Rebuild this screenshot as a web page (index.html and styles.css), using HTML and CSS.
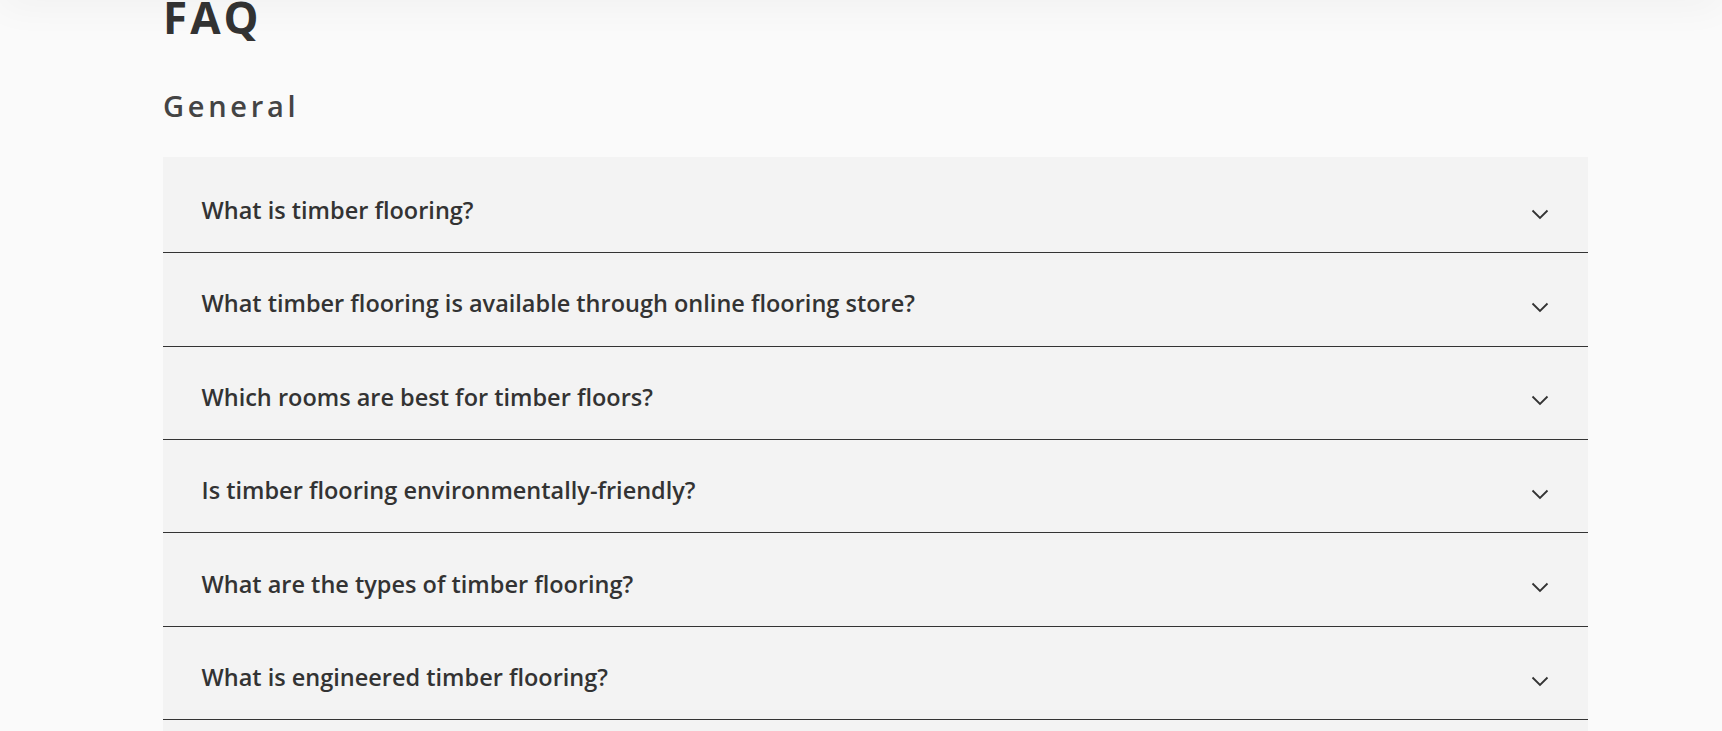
FILE: index.html
```html
<!DOCTYPE html>
<html lang="en">
<head>
<meta charset="utf-8">
<title>FAQ</title>
<link rel="stylesheet" href="styles.css">
</head>
<body>
<div class="top-shadow"></div>
<main class="faq">
  <h1 class="faq-title">FAQ</h1>
  <h2 class="faq-group">General</h2>
  <div class="accordion">
    <div class="acc-item first">
      <span class="acc-q">What is timber flooring?</span>
      <svg class="chev" width="18" height="11" viewBox="0 0 18 11"><polyline points="1.5,1.5 9,9 16.5,1.5" fill="none" stroke="#333" stroke-width="1.8"/></svg>
    </div>
    <div class="acc-item">
      <span class="acc-q">What timber flooring is available through online flooring store?</span>
      <svg class="chev" width="18" height="11" viewBox="0 0 18 11"><polyline points="1.5,1.5 9,9 16.5,1.5" fill="none" stroke="#333" stroke-width="1.8"/></svg>
    </div>
    <div class="acc-item">
      <span class="acc-q">Which rooms are best for timber floors?</span>
      <svg class="chev" width="18" height="11" viewBox="0 0 18 11"><polyline points="1.5,1.5 9,9 16.5,1.5" fill="none" stroke="#333" stroke-width="1.8"/></svg>
    </div>
    <div class="acc-item">
      <span class="acc-q">Is timber flooring environmentally-friendly?</span>
      <svg class="chev" width="18" height="11" viewBox="0 0 18 11"><polyline points="1.5,1.5 9,9 16.5,1.5" fill="none" stroke="#333" stroke-width="1.8"/></svg>
    </div>
    <div class="acc-item">
      <span class="acc-q">What are the types of timber flooring?</span>
      <svg class="chev" width="18" height="11" viewBox="0 0 18 11"><polyline points="1.5,1.5 9,9 16.5,1.5" fill="none" stroke="#333" stroke-width="1.8"/></svg>
    </div>
    <div class="acc-item">
      <span class="acc-q">What is engineered timber flooring?</span>
      <svg class="chev" width="18" height="11" viewBox="0 0 18 11"><polyline points="1.5,1.5 9,9 16.5,1.5" fill="none" stroke="#333" stroke-width="1.8"/></svg>
    </div>
    <div class="acc-item">
      <span class="acc-q">What is solid timber flooring?</span>
      <svg class="chev" width="18" height="11" viewBox="0 0 18 11"><polyline points="1.5,1.5 9,9 16.5,1.5" fill="none" stroke="#333" stroke-width="1.8"/></svg>
    </div>
  </div>
</main>
</body>
</html>
```

FILE: styles.css
```css
html, body {
  margin: 0;
  padding: 0;
}
body {
  background: #fafafa;
  font-family: "Open Sans", "Liberation Sans", sans-serif;
  color: #333;
  overflow: hidden;
}
.top-shadow {
  position: fixed;
  top: -20px;
  left: 0;
  right: 0;
  height: 20px;
  box-shadow: 0 0 40px rgba(0, 0, 0, 0.07);
}
.faq {
  width: 1425px;
  margin-left: 163px;
}
.faq-title {
  margin: -5px 0 0;
  font-size: 44px;
  line-height: 1;
  font-weight: 700;
  letter-spacing: 3px;
  color: #333;
}
.faq-group {
  margin: 50px 0 0;
  font-size: 29px;
  line-height: 1.2;
  font-weight: 600;
  letter-spacing: 3.7px;
  color: #444;
}
.accordion {
  margin-top: 33px;
}
.acc-item {
  box-sizing: border-box;
  height: 93.4px;
  display: flex;
  align-items: center;
  justify-content: space-between;
  padding: 9px 39px 0 38.5px;
  background: #f3f3f3;
  border-bottom: 1px solid #333;
}
.acc-item.first {
  height: 96.5px;
  padding-top: 12px;
}
.acc-q {
  font-size: 23.5px;
  line-height: 1.5;
  font-weight: 600;
  color: #333;
}
.chev {
  display: block;
  margin-top: 7px;
}
```
